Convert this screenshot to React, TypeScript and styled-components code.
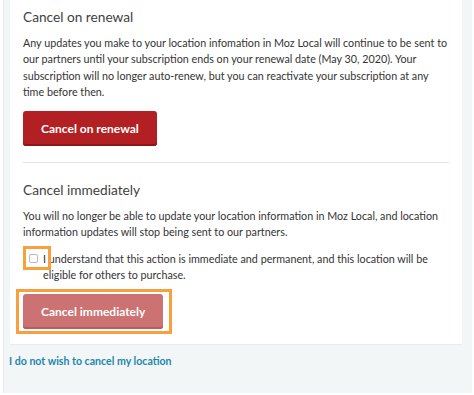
import React from "react";
import styled, { createGlobalStyle } from "styled-components";

const Global = createGlobalStyle`
  html, body { margin: 0; padding: 0; background: #ffffff; }
  body { font-family: Lato, "Open Sans", sans-serif; -webkit-font-smoothing: antialiased; }
`;

const Page = styled.div`
  margin-left: 3px;
  width: 469px;
  height: 393px;
  background: #f3f6f7;
  border-left: 1px solid #e6e9ea;
  box-sizing: border-box;
  display: flex;
  flex-direction: column;
`;

const Card = styled.div`
  margin-left: 6px;
  width: 452px;
  background: #ffffff;
  padding: 5px 13px 15px 13px;
  box-sizing: border-box;
  box-shadow: 0 1px 1px rgba(0, 0, 0, 0.04);
`;

const Section = styled.section`
  display: flex;
  flex-direction: column;
  align-items: flex-start;
`;

const Heading = styled.h2`
  margin: 0 0 6px 0;
  font-size: 13.7px;
  font-weight: 400;
  line-height: 24px;
  color: #3f3f3f;
`;

const Body = styled.p<{ $mb: number }>`
  margin: 0 0 ${(p) => p.$mb}px 0;
  font-size: 10.75px;
  line-height: 16.3px;
  color: #333333;
`;

const Button = styled.button<{ $faded?: boolean }>`
  font-family: Lato, "Open Sans", sans-serif;
  font-weight: 700;
  font-size: 12px;
  color: #ffffff;
  border: none;
  border-radius: 3px;
  height: 35px;
  padding: 0 18px;
  background: ${(p) => (p.$faded ? "#cc7272" : "#b22024")};
  box-shadow: inset 0 -2px 0 ${(p) => (p.$faded ? "#b45e5f" : "#8e1518")};
  cursor: pointer;
`;

const Divider = styled.hr`
  align-self: stretch;
  border: none;
  border-top: 1px solid #e3e6e8;
  margin: 16px 0 15px 0;
`;

const CheckRow = styled.label`
  display: flex;
  align-items: flex-start;
  gap: 5px;
  font-size: 10.75px;
  line-height: 16.3px;
  color: #333333;
  margin: 0 0 11px 0;
`;

const BoxWrap = styled.span`
  position: relative;
  margin-left: 6px;
  margin-top: 3px;
  flex: 0 0 auto;
  display: flex;
`;

const Box = styled.span`
  width: 7px;
  height: 7px;
  border: 1px solid #b9bcbf;
  border-radius: 2px;
  background: #fff;
`;

const Highlight = styled.span<{ $l: number; $r: number; $t: number; $b: number }>`
  position: absolute;
  left: ${(p) => p.$l}px;
  right: ${(p) => p.$r}px;
  top: ${(p) => p.$t}px;
  bottom: ${(p) => p.$b}px;
  border: 3px solid #f7a03c;
  pointer-events: none;
`;

const ButtonWrap = styled.div`
  position: relative;
  display: inline-flex;
`;

const Link = styled.a`
  margin: 9px 0 0 5px;
  font-size: 10.6px;
  font-weight: 700;
  color: #1c87ae;
  text-decoration: none;
  line-height: 16px;
`;

export default function App() {
  return (
    <>
      <Global />
      <Page>
        <Card>
          <Section>
            <Heading>Cancel on renewal</Heading>
            <Body $mb={11}>
              Any updates you make to your location infomation in Moz Local will continue to be sent to
              our partners until your subscription ends on your renewal date (May 30, 2020). Your
              subscription will no longer auto-renew, but you can reactivate your subscription at any
              time before then.
            </Body>
            <Button>Cancel on renewal</Button>
          </Section>
          <Divider />
          <Section>
            <Heading>Cancel immediately</Heading>
            <Body $mb={10}>
              You will no longer be able to update your location information in Moz Local, and location
              information updates will stop being sent to our partners.
            </Body>
            <CheckRow>
              <BoxWrap>
                <Box />
                <Highlight $l={-6} $r={-13} $t={-8} $b={-7} />
              </BoxWrap>
              <span>
                I understand that this action is immediate and permanent, and this location will be
                eligible for others to purchase.
              </span>
            </CheckRow>
            <ButtonWrap>
              <Button $faded>Cancel immediately</Button>
              <Highlight $l={-7} $r={-9} $t={-5} $b={-5} />
            </ButtonWrap>
          </Section>
        </Card>
        <Link href="#">I do not wish to cancel my location</Link>
      </Page>
    </>
  );
}
